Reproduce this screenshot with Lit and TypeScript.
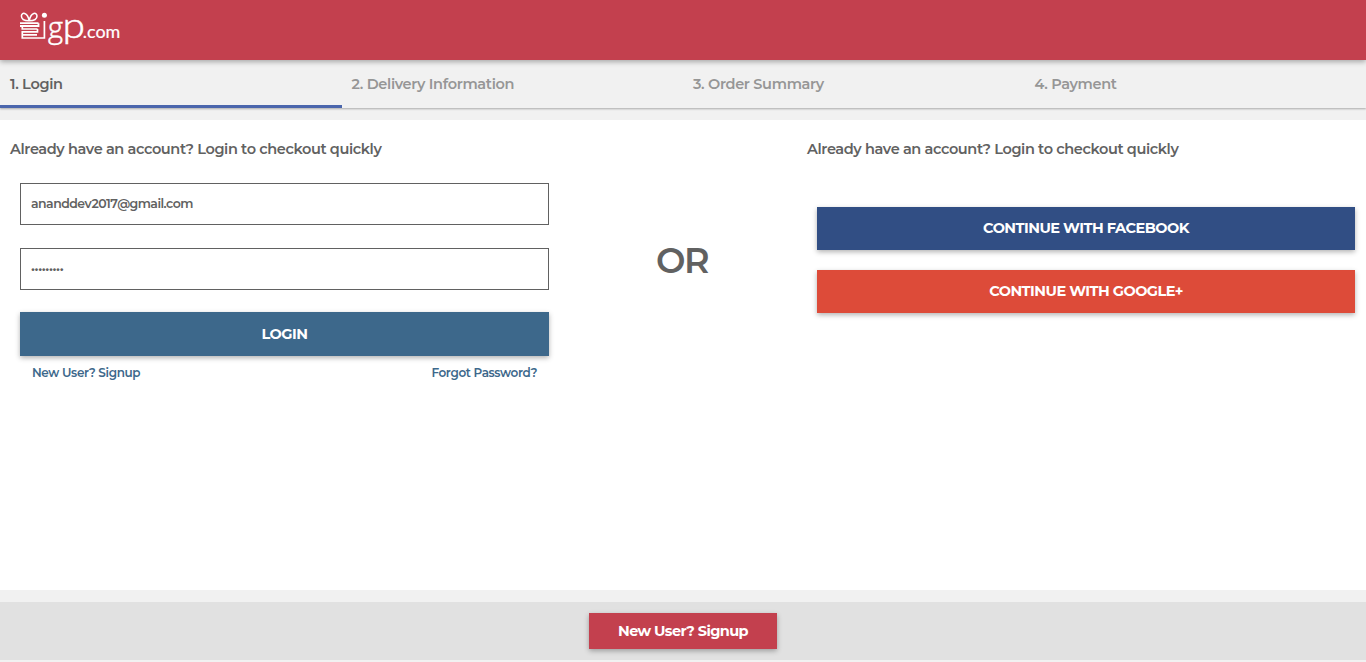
import { LitElement, html, css } from "lit";
import { customElement } from "lit/decorators.js";

@customElement("app-root")
export class AppRoot extends LitElement {
  static styles = css`
    :host { display: flex; flex-direction: column; height: 662px; background: #f1f1f1; color: #616161;
      font-family: Montserrat, Inter, sans-serif; font-size: 14.5px; font-weight: 600; line-height: 20px; letter-spacing: -.37px; overflow: hidden; }
    * { box-sizing: border-box; }
    header { height: 60px; flex: none; background: #c3404e; box-shadow: 0 2px 5px rgba(0,0,0,.3); z-index: 1; position: relative; }
    .logo { display: block; }
    .logo text { fill: #fff; stroke: #fff; stroke-width: .5; letter-spacing: 0; }
    .g { font: 300 30px "Open Sans", sans-serif; }
    .p { font: 300 35px Lato, sans-serif; }
    .logo .com { font: 400 18px Lato, sans-serif; stroke-width: .2; }
    .steps { display: grid; grid-template-columns: repeat(4, 1fr); height: 48px; flex: none; box-shadow: 0 1px 2px rgba(0,0,0,.3); letter-spacing: -.32px; }
    .step { padding: 14px 10px 0; color: #969696; }
    .step.active { color: #616161; border-bottom: 3px solid #4b66ac; }
    main { height: 470px; flex: none; margin-top: 12px; background: #fff; display: grid; grid-template-columns: 569px 228px 1fr; }
    h2 { margin: 0; padding: 19px 10px 0; font-size: inherit; font-weight: 600; line-height: 20px; }
    form { padding: 24px 20px 0; }
    input { display: block; width: 100%; height: 42px; margin: 0 0 23px; padding: 0 10px 2px; border: 1px solid #616161; border-radius: 0;
      background: #fff; color: #616161; font: inherit; font-weight: 600; font-size: 12.5px; letter-spacing: -.52px; outline: 0; }
    .pw { margin-bottom: 22px; padding-bottom: 0; font-size: 11px; font-weight: 700; letter-spacing: -.4px; }
    button { display: block; width: 100%; height: 43px; border: 0; padding: 0 0 2px; color: #fff; font: inherit; font-weight: 700; letter-spacing: -.52px;
      box-shadow: 0 2px 5px rgba(0,0,0,.3); }
    .login { height: 44px; padding: 0; background: #3d688b; }
    .links { display: flex; justify-content: space-between; padding: 7px 12px; font-size: 12px; font-weight: 600; letter-spacing: -.36px; color: #3d688b; }
    .or { padding: 120px 2px 0 0; text-align: center; font-size: 35px; line-height: 42px; letter-spacing: -1.6px; }
    .social { padding: 48px 11px 0 20px; display: grid; gap: 20px; }
    .fb { background: #314e84; }
    .gp { background: #dd4b39; }
    footer { margin-top: 12px; height: 58px; flex: none; background: #e1e1e1; padding-top: 11px; }
    .signup { width: 188px; height: 36px; padding: 0; margin: 0 auto; background: #c3404e; letter-spacing: -.6px; }
  `;
  render() {
    return html`
      <header><svg class="logo" width="130" height="60" fill="none" stroke="#fff">
        <path stroke-width="1.5" d="M29 20.8C24 20.8 21.4 18.8 21.4 16C21.4 12 27.5 11.8 29.2 20.8C31 11.8 37 12 37 16C37 18.8 34 20.8 29 20.8"/>
        <path stroke-width="1.8" d="M20 23.2H38.5M20 26H38.5V23.2"/>
        <path stroke-width="1.7" d="M22.3 26V29H37.5M37.5 29V31.8H22.3V34.8H37M22.3 34.8V38H44.4V21"/>
        <circle cx="44.4" cy="15.3" r="2.5" fill="#fff" stroke="none"/>
        <text class="g" x="48" y="38" textLength="15" lengthAdjust="spacingAndGlyphs">g</text>
        <text class="p" x="62.5" y="38" textLength="22.5" lengthAdjust="spacingAndGlyphs">p</text>
        <text class="com" x="82.8" y="38.3" textLength="37.5" lengthAdjust="spacingAndGlyphs">.com</text>
      </svg></header>
      <nav class="steps">
        <div class="step active"><span>1. Login</span></div>
        <div class="step"><span>2. Delivery Information</span></div>
        <div class="step"><span>3. Order Summary</span></div>
        <div class="step"><span>4. Payment</span></div>
      </nav>
      <main>
        <section><h2>Already have an account? Login to checkout quickly</h2>
          <form><input value="ananddev2017@gmail.com"><input class="pw" type="password" value="123456789">
            <button class="login" type="button">LOGIN</button>
            <div class="links"><span>New User? Signup</span><span>Forgot Password?</span></div>
          </form></section>
        <div class="or">OR</div>
        <section><h2>Already have an account? Login to checkout quickly</h2>
          <div class="social"><button class="fb">CONTINUE WITH FACEBOOK</button><button class="gp">CONTINUE WITH GOOGLE+</button></div>
        </section>
      </main>
      <footer><button class="signup">New User? Signup</button></footer>`;
  }
}
